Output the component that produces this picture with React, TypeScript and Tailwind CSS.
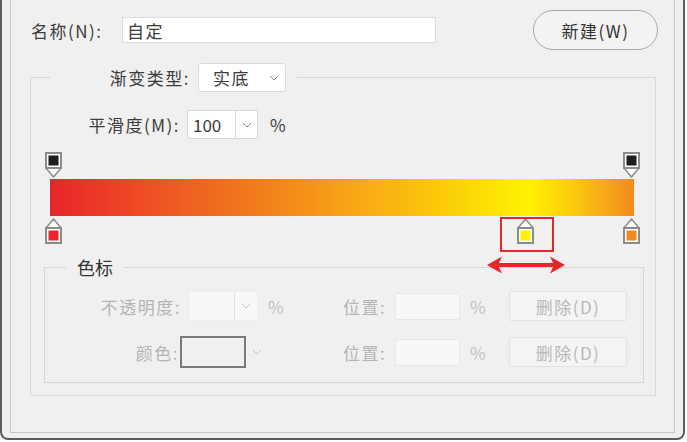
import React from "react";

const BAR_GRADIENT =
  "linear-gradient(to right, #e8252a 0%, #f6a116 50%, #fff200 82%, #fbc70f 90%, #f38a1f 100%)";

function Chevron({ color = "#8a8a8a" }: { color?: string }) {
  return (
    <svg width="10" height="6" viewBox="0 0 10 6">
      <polyline points="1,1 5,5 9,1" fill="none" stroke={color} strokeWidth="1" />
    </svg>
  );
}

function Stop({ color, point }: { color: string; point: "up" | "down" }) {
  if (point === "down") {
    return (
      <svg width="17" height="26" viewBox="0 0 17 26">
        <polygon points="1,16 16,16 8.5,25" fill="#fff" stroke="#8c8c8c" strokeWidth="1.5" strokeLinejoin="round" />
        <rect x="1" y="1" width="15" height="15" fill="#fff" stroke="#8c8c8c" strokeWidth="2" />
        <rect x="3.5" y="3.5" width="10" height="10" fill={color} />
      </svg>
    );
  }
  return (
    <svg width="17" height="26" viewBox="0 0 17 26">
      <polygon points="1,10 16,10 8.5,1" fill="#fff" stroke="#8c8c8c" strokeWidth="1.5" strokeLinejoin="round" />
      <rect x="1" y="10" width="15" height="15" fill="#fff" stroke="#8c8c8c" strokeWidth="2" />
      <rect x="3.5" y="12.5" width="10" height="10" fill={color} />
    </svg>
  );
}

function DoubleArrow() {
  return (
    <svg width="78" height="18" viewBox="0 0 78 18">
      <line x1="8" y1="9" x2="70" y2="9" stroke="#e5262b" strokeWidth="4" />
      <polygon points="0,9 15,0.5 11,9 15,17.5" fill="#e5262b" />
      <polygon points="78,9 63,0.5 67,9 63,17.5" fill="#e5262b" />
    </svg>
  );
}

function DisabledButton() {
  return (
    <div className="ml-[22px] flex h-[30px] w-[118px] items-center justify-center rounded-[2px] border border-[#e2e2e2] bg-[#f4f4f4] text-[#b8b8b8]">
      删除(D)
    </div>
  );
}

function PositionField() {
  return (
    <div className="flex items-center">
      <span className="w-[46px] text-[#b4b4b4]">位置:</span>
      <div className="ml-[6px] h-[27px] w-[65px] rounded-[2px] border border-[#e6e6e6] bg-[#f8f8f8]" />
      <span className="ml-[10px] w-[17px] text-[#c0c0c0]">%</span>
      <DisabledButton />
    </div>
  );
}

export default function App() {
  return (
    <div className="h-[442px] w-[687px] overflow-hidden bg-white font-['Noto_Sans_CJK_SC',sans-serif] text-[17px] leading-none tracking-[1.5px] text-[#3c3c3c]">
      <div className="flex h-[440px] w-[685px] flex-col rounded-b-[8px] border-x-2 border-b-2 border-[#5c5c5c] bg-[#f0f0f0] px-[8px] pb-[5px]">
        <div className="flex flex-1 flex-col border-x border-b border-[#c6c6c6]">
          {/* name row */}
          <div className="mt-[10px] flex h-[40px] items-center pl-[20px] pr-[16px]">
            <span className="w-[91px]">名称(N):</span>
            <div className="flex h-[26px] w-[314px] items-center border border-[#dcdcdc] bg-white pl-[4px]">
              自定
            </div>
            <button className="ml-auto flex h-[40px] w-[125px] items-center justify-center rounded-full border border-[#a8a8a8] bg-[#f3f3f3] text-[#333]">
              新建(W)
            </button>
          </div>

          {/* gradient group */}
          <fieldset className="ml-[19px] mt-[13px] w-[626px] border border-[#d6d6d6] pb-[12px]">
            <legend className="ml-[19px] pr-[11px]">
              <div className="flex items-center">
                <span className="w-[140px] text-right">渐变类型:</span>
                <div className="ml-[8px] flex h-[29px] w-[88px] items-center justify-between rounded-[3px] border border-[#dadada] bg-white pl-[14px] pr-[6px]">
                  <span>实底</span>
                  <Chevron />
                </div>
              </div>
            </legend>

            <div className="mt-[18px] flex h-[29px] items-center">
              <span className="w-[149px] text-right">平滑度(M):</span>
              <div className="ml-[7px] flex h-[29px] w-[71px] items-center rounded-[2px] border border-[#d6d6d6] bg-white">
                <span className="flex-1 pl-[5px] tracking-normal">100</span>
                <div className="flex h-full w-[22px] items-center justify-center border-l border-[#d6d6d6]">
                  <Chevron />
                </div>
              </div>
              <span className="ml-[12px]">%</span>
            </div>

            {/* gradient editor */}
            <div className="relative ml-[13px] mt-[13px] w-[596px]">
              <div className="relative h-[27px]">
                <div className="absolute left-[1px] top-0">
                  <Stop color="#1e1e1e" point="down" />
                </div>
                <div className="absolute left-[579px] top-0">
                  <Stop color="#1e1e1e" point="down" />
                </div>
              </div>
              <div className="ml-[6px] h-[37px] w-[584px]" style={{ backgroundImage: BAR_GRADIENT }} />
              <div className="relative mt-[2px] h-[28px]">
                <div className="absolute left-[1px] top-0">
                  <Stop color="#e8252a" point="up" />
                </div>
                <div className="absolute left-[473px] top-0">
                  <Stop color="#fff200" point="up" />
                </div>
                <div className="absolute left-[579px] top-0">
                  <Stop color="#f38a1f" point="up" />
                </div>
                <div className="absolute left-[456px] top-[-1px] h-[35px] w-[54px] border-2 border-[#e5262b]" />
              </div>
              <div className="absolute left-[443px] top-[104px] z-10">
                <DoubleArrow />
              </div>
            </div>

            {/* color stops group */}
            <fieldset className="ml-[13px] mt-[9px] w-[600px] border border-[#d6d6d6] pb-[14px]">
              <legend className="ml-[21px] px-[11px] text-[18px] leading-[24px] tracking-normal text-[#333]">色标</legend>

              <div className="mt-[12px] flex h-[30px] items-center">
                <div className="flex w-[298px] items-center">
                  <span className="w-[136px] text-right text-[#b4b4b4]">不透明度:</span>
                  <div className="ml-[7px] flex h-[30px] w-[70px] items-center rounded-[2px] border border-[#ececec] bg-[#f8f8f8]">
                    <span className="flex-1" />
                    <div className="flex h-full w-[23px] items-center justify-center border-l border-[#e2e2e2]">
                      <Chevron color="#c4c4c4" />
                    </div>
                  </div>
                  <span className="ml-[10px] text-[#c0c0c0]">%</span>
                </div>
                <PositionField />
              </div>

              <div className="mt-[15px] flex h-[32px] items-center">
                <div className="flex w-[298px] items-center">
                  <span className="w-[134px] text-right text-[#b4b4b4]">颜色:</span>
                  <div className="ml-[1px] h-[32px] w-[66px] border-2 border-[#7a7a7a] bg-[#f0f0f0]" />
                  <span className="ml-[6px]">
                    <Chevron color="#c4c4c4" />
                  </span>
                </div>
                <PositionField />
              </div>
            </fieldset>
          </fieldset>
        </div>
      </div>
    </div>
  );
}
